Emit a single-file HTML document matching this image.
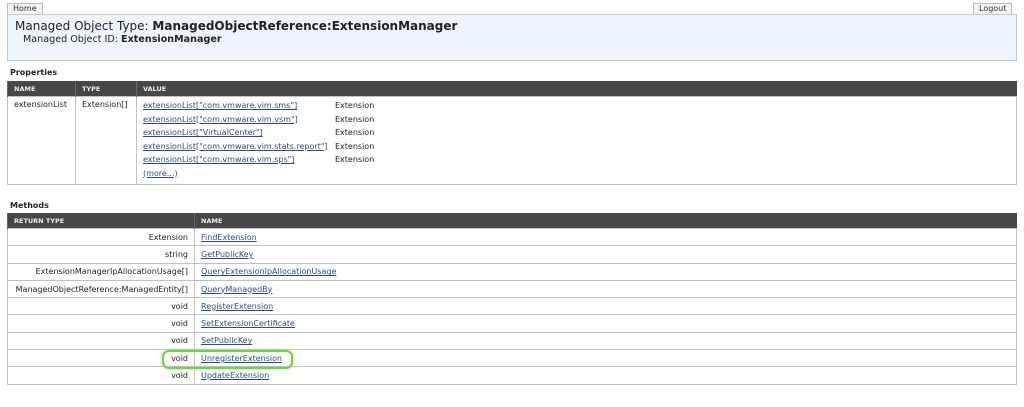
<!DOCTYPE html>
<html><head><style>
body{margin:0;background:#fff;font-family:"DejaVu Sans","Liberation Sans",sans-serif;font-size:8px;color:#222;width:1024px;height:407px;overflow:hidden;position:relative}
.tab{position:absolute;top:3px;height:10px;line-height:10px;border:1px solid #bbb;border-bottom:none;background:#f3f3f3;font-size:8px;padding:0 5px;color:#333}
.hdr{position:absolute;left:7px;top:14px;width:1008px;height:45px;background:#eef4fd;border:1px solid #c8c8c8}
.t1{position:absolute;left:7px;top:4px;font-size:12px;color:#222}
.t2{position:absolute;left:15px;top:19px;font-size:9.6px;color:#222}
.lbl{position:absolute;left:10px;font-weight:bold;font-size:8px}
table{position:absolute;left:7px;width:1010px;border-collapse:collapse}
th{background:#474747;color:#eee;font-size:6.5px;text-align:left;padding:0 6px;height:15px;border-left:1px solid #666}
td{border:1px solid #c0c0c0;padding:0 6px;vertical-align:top}
a{color:#2b4a8a;text-decoration:underline}
.m td{height:16.3px;vertical-align:middle;padding:0 6px}
.m td.r{text-align:right}
</style></head><body>
<div class="tab" style="left:7px">Home</div>
<div class="tab" style="left:973px">Logout</div>
<div class="hdr"><div class="t1">Managed Object Type: <b>ManagedObjectReference:ExtensionManager</b></div><div class="t2">Managed Object ID: <b>ExtensionManager</b></div></div>
<div class="lbl" style="top:68px">Properties</div>
<table style="top:81px">
<tr><th style="width:55px">NAME</th><th style="width:48px">TYPE</th><th>VALUE</th></tr>
<tr><td style="height:84px;padding-top:3px">extensionList</td><td style="padding-top:3px">Extension[]</td><td style="padding-top:2px;line-height:13.5px">
<div style="display:flex"><div style="width:192px"><a>extensionList["com.vmware.vim.sms"]</a><br><a>extensionList["com.vmware.vim.vsm"]</a><br><a>extensionList["VirtualCenter"]</a><br><a>extensionList["com.vmware.vim.stats.report"]</a><br><a>extensionList["com.vmware.vim.sps"]</a><br><a>(more...)</a></div><div>Extension<br>Extension<br>Extension<br>Extension<br>Extension</div></div></td></tr>
</table>
<div class="lbl" style="top:201px">Methods</div>
<table class="m" style="top:213px">
<tr><th style="width:174px">RETURN TYPE</th><th>NAME</th></tr>
<tr><td class="r">Extension</td><td><a>FindExtension</a></td></tr>
<tr><td class="r">string</td><td><a>GetPublicKey</a></td></tr>
<tr><td class="r">ExtensionManagerIpAllocationUsage[]</td><td><a>QueryExtensionIpAllocationUsage</a></td></tr>
<tr><td class="r">ManagedObjectReference:ManagedEntity[]</td><td><a>QueryManagedBy</a></td></tr>
<tr><td class="r">void</td><td><a>RegisterExtension</a></td></tr>
<tr><td class="r">void</td><td><a>SetExtensionCertificate</a></td></tr>
<tr><td class="r">void</td><td><a>SetPublicKey</a></td></tr>
<tr><td class="r">void</td><td><a>UnregisterExtension</a></td></tr>
<tr><td class="r">void</td><td><a>UpdateExtension</a></td></tr>
</table>
<div style="position:absolute;left:162px;top:350px;width:127px;height:15px;border:2px solid #6fd34a;border-radius:7px;box-shadow:0 0 3px #9be07f"></div>
</body></html>
